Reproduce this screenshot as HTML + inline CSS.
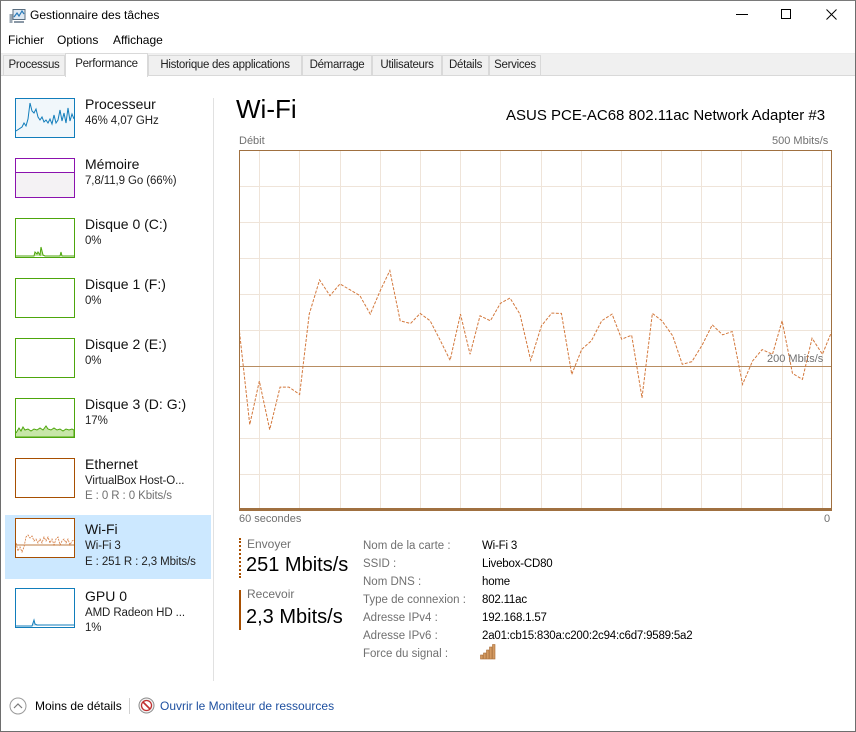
<!DOCTYPE html>
<html><head><meta charset="utf-8"><style>
*{margin:0;padding:0;box-sizing:border-box}
body{width:856px;height:732px;overflow:hidden;background:#fff;font-family:"Liberation Sans",sans-serif;font-size:12px;color:#000;position:relative}
.a{position:absolute;white-space:nowrap}
.win{position:absolute;left:0;top:0;width:856px;height:732px;border:1px solid #6e6e6e;border-top-color:#7a7a7a}
.tab{position:absolute;top:55px;height:20px;border:1px solid #d9d9d9;border-bottom:none;background:#f0f0f0;padding:3px 0 0;font-size:11.5px;letter-spacing:-0.3px;text-align:center;color:#222}
.th{position:absolute;left:15px;width:60px;height:40px;background:#fff}
.t1{font-size:14px;color:#111}
.t2{font-size:11.5px;color:#222;letter-spacing:-0.1px}
.g{color:#707070}
</style></head><body>
<div class="win"></div>
<svg class="a" style="left:9px;top:9px" width="17" height="15" viewBox="0 0 17 15"><rect x="4" y="0.5" width="12" height="10" fill="#dfe9f3" stroke="#5a6e80"/><polyline points="5,8 8,4 10,7 13,2 15,5" fill="none" stroke="#2a7ab8" stroke-width="1.2"/><rect x="0.5" y="5" width="3" height="9" fill="#9aa7b3"/><rect x="5" y="12" width="10" height="2" fill="#8a98a6"/></svg>
<div class="a" style="left:30px;top:8px;font-size:12px">Gestionnaire des tâches</div>
<div class="a" style="left:736px;top:14px;width:12px;height:1px;background:#000"></div>
<div class="a" style="left:781px;top:9px;width:10px;height:10px;border:1px solid #000"></div>
<svg class="a" style="left:826px;top:9px" width="11" height="11"><path d="M0.5 0.5L10.5 10.5M10.5 0.5L0.5 10.5" stroke="#000"/></svg>
<div class="a" style="left:8px;top:33px">Fichier</div>
<div class="a" style="left:57px;top:33px">Options</div>
<div class="a" style="left:113px;top:33px">Affichage</div>
<div class="a" style="left:1px;top:53px;width:854px;height:23px;background:#f0f0f0;border-top:1px solid #ececec;border-bottom:1px solid #d9d9d9"></div>
<div class="tab" style="left:3px;width:62px">Processus</div>
<div class="tab" style="left:65px;top:53px;height:24px;width:83px;background:#fff;padding-top:4px">Performance</div>
<div class="tab" style="left:148px;width:154px">Historique des applications</div>
<div class="tab" style="left:302px;width:70px">Démarrage</div>
<div class="tab" style="left:372px;width:70px">Utilisateurs</div>
<div class="tab" style="left:442px;width:47px">Détails</div>
<div class="tab" style="left:489px;width:52px">Services</div>
<div class="a" style="left:5px;top:515px;width:206px;height:64px;background:#cce8ff"></div>
<div class="a" style="left:213px;top:98px;width:1px;height:583px;background:#e1e1e1"></div>

<div class="th" style="top:98px;border:1px solid #117dbb;background:#f1f7fb"><svg width="58" height="38"><polyline points="0,32 3,30 6,28 8,24 10,27 12,20 14,4 16,12 18,14 20,10 22,18 24,21 26,18 28,23 30,21 32,24 34,20 36,25 38,16 40,24 42,21 44,11 46,22 48,14 50,24 52,9 54,22 56,15 58,20" fill="none" stroke="#117dbb" stroke-width="1"/></svg></div>
<div class="a t1" style="left:85px;top:96px">Processeur</div><div class="a t2" style="left:85px;top:115px">46% 4,07 GHz</div>

<div class="th" style="top:158px;border:1px solid #8b12ae"><div style="position:absolute;left:0;right:0;top:13px;bottom:0;background:#f4f2f4;border-top:1px solid #8b12ae"></div></div>
<div class="a t1" style="left:85px;top:156px">Mémoire</div><div class="a t2" style="left:85px;top:175px">7,8/11,9 Go (66%)</div>

<div class="th" style="top:218px;border:1px solid #4da60c"><svg width="58" height="38"><polyline points="0,37 18,37 19,33 21,35 22,33 24,36 25,28 27,36 29,37 44,37 45,33 46,37 58,37" fill="#c7e6a8" stroke="#4da60c"/></svg></div>
<div class="a t1" style="left:85px;top:216px">Disque 0 (C:)</div><div class="a t2" style="left:85px;top:235px">0%</div>
<div class="th" style="top:278px;border:1px solid #4da60c"></div>
<div class="a t1" style="left:85px;top:276px">Disque 1 (F:)</div><div class="a t2" style="left:85px;top:295px">0%</div>
<div class="th" style="top:338px;border:1px solid #4da60c"></div>
<div class="a t1" style="left:85px;top:336px">Disque 2 (E:)</div><div class="a t2" style="left:85px;top:355px">0%</div>
<div class="th" style="top:398px;border:1px solid #4da60c"><svg width="58" height="38"><polyline points="0,34 3,29 5,32 7,28 9,31 12,30 15,32 18,30 21,31 24,29 27,31 30,27 32,30 35,31 38,29 41,31 44,30 47,32 50,30 53,31 56,30 58,31 58,38 0,38" fill="#c7e6a8" stroke="#4da60c"/></svg></div>
<div class="a t1" style="left:85px;top:396px">Disque 3 (D: G:)</div><div class="a t2" style="left:85px;top:415px">17%</div>

<div class="th" style="top:458px;border:1px solid #a74f01"></div>
<div class="a t1" style="left:85px;top:456px">Ethernet</div><div class="a t2" style="left:85px;top:475px">VirtualBox Host-O...</div><div class="a t2 g" style="left:85px;top:490px">E : 0 R : 0 Kbits/s</div>

<div class="th" style="top:518px;border:1px solid #a74f01"><svg width="58" height="38"><line x1="0" y1="26" x2="58" y2="26" stroke="#a74f01" stroke-width="0.8"/><polyline points="0,24 2,32 4,28 6,33 8,28 10,18 12,16 14,19 16,17 18,22 20,20 22,24 24,20 26,24 28,18 30,22 32,18 34,24 36,20 38,26 40,20 42,18 44,26 46,22 48,20 50,24 52,20 54,26 56,22 58,21" fill="none" stroke="#d3783c" stroke-width="0.8" stroke-dasharray="2,1"/></svg></div>
<div class="a t1" style="left:85px;top:521px">Wi-Fi</div><div class="a t2" style="left:85px;top:540px">Wi-Fi 3</div><div class="a t2" style="left:85px;top:556px">E : 251 R : 2,3 Mbits/s</div>

<div class="th" style="top:588px;border:1px solid #117dbb"><svg width="58" height="38"><polyline points="0,37 16,37 17,34 18,31 19,35 21,36 58,36" fill="#bfdcee" stroke="#117dbb"/></svg></div>
<div class="a t1" style="left:85px;top:588px">GPU 0</div><div class="a t2" style="left:85px;top:607px">AMD Radeon HD ...</div><div class="a t2" style="left:85px;top:622px">1%</div>

<div class="a" style="left:236px;top:94px;font-size:26px;font-weight:300">Wi-Fi</div>
<div class="a" style="left:506px;top:107px;font-size:15px">ASUS PCE-AC68 802.11ac Network Adapter #3</div>
<div class="a g" style="left:239px;top:135px;font-size:11px">Débit</div>
<div class="a g" style="left:772px;top:135px;font-size:11px">500 Mbits/s</div>
<svg class="a" style="left:239px;top:150px" width="593" height="361">
<g stroke="#efe4d9" stroke-width="1">
<line x1="0" y1="36.5" x2="593" y2="36.5"/><line x1="0" y1="72.5" x2="593" y2="72.5"/><line x1="0" y1="108.5" x2="593" y2="108.5"/><line x1="0" y1="144.5" x2="593" y2="144.5"/><line x1="0" y1="180.5" x2="593" y2="180.5"/><line x1="0" y1="252.5" x2="593" y2="252.5"/><line x1="0" y1="288.5" x2="593" y2="288.5"/><line x1="0" y1="324.5" x2="593" y2="324.5"/>
<line x1="20.5" y1="0" x2="20.5" y2="361"/><line x1="60.5" y1="0" x2="60.5" y2="361"/><line x1="101.5" y1="0" x2="101.5" y2="361"/><line x1="141.5" y1="0" x2="141.5" y2="361"/><line x1="181.5" y1="0" x2="181.5" y2="361"/><line x1="221.5" y1="0" x2="221.5" y2="361"/><line x1="261.5" y1="0" x2="261.5" y2="361"/><line x1="302.5" y1="0" x2="302.5" y2="361"/><line x1="342.5" y1="0" x2="342.5" y2="361"/><line x1="382.5" y1="0" x2="382.5" y2="361"/><line x1="422.5" y1="0" x2="422.5" y2="361"/><line x1="462.5" y1="0" x2="462.5" y2="361"/><line x1="502.5" y1="0" x2="502.5" y2="361"/><line x1="543.5" y1="0" x2="543.5" y2="361"/><line x1="583.5" y1="0" x2="583.5" y2="361"/>
</g>
<line x1="0" y1="216.5" x2="593" y2="216.5" stroke="#b88d62" stroke-width="1"/>
<text x="528" y="212" font-size="11" fill="#707070" font-family="Liberation Sans, sans-serif">200 Mbits/s</text>
<svg x="0" y="0" width="593" height="361" viewBox="10 30 1545 1078" preserveAspectRatio="none">
<polyline vector-effect="non-scaling-stroke" fill="none" stroke="#d3783c" stroke-width="1" stroke-dasharray="3,1.5" points="10,560 38,850 63,720 90,865 117,738 140,738 168,760 193,520 220,418 247,465 273,430 300,448 325,465 352,520 378,450 403,390 430,540 457,548 482,518 508,540 535,600 560,658 587,520 612,640 638,525 665,540 691,488 716,472 742,520 770,658 798,555 825,517 850,518 877,700 903,625 928,600 955,540 982,520 1007,595 1033,583 1060,770 1087,518 1112,540 1140,585 1165,670 1190,662 1217,612 1243,552 1270,582 1295,572 1322,730 1348,660 1373,626 1400,640 1425,540 1452,697 1478,715 1503,592 1530,640 1555,570"/>
</svg>
<rect x="0.5" y="0.5" width="592" height="360" fill="none" stroke="#a07040" stroke-width="1"/>
<line x1="0" y1="359" x2="593" y2="359" stroke="#a07040" stroke-width="2"/>
</svg>
<div class="a g" style="left:239px;top:513px;font-size:11px">60 secondes</div>
<div class="a g" style="left:824px;top:513px;font-size:11px">0</div>

<div class="a" style="left:239px;top:538px;height:40px;border-left:2px dotted #a74f01"></div>
<div class="a g" style="left:247px;top:537px;font-size:12px">Envoyer</div>
<div class="a" style="left:246px;top:554px;font-size:20px">251 Mbits/s</div>
<div class="a" style="left:239px;top:590px;width:2px;height:40px;background:#a74f01"></div>
<div class="a g" style="left:247px;top:587px;font-size:12px">Recevoir</div>
<div class="a" style="left:246px;top:606px;font-size:20px">2,3 Mbits/s</div>

<div class="a g" style="left:363px;top:537px;line-height:18px;font-size:11.5px">Nom de la carte :<br>SSID :<br>Nom DNS :<br>Type de connexion :<br>Adresse IPv4 :<br>Adresse IPv6 :<br>Force du signal :</div>
<div class="a" style="left:482px;top:537px;line-height:18px;font-size:11.5px;letter-spacing:-0.2px">Wi-Fi 3<br>Livebox-CD80<br>home<br>802.11ac<br>192.168.1.57<br>2a01:cb15:830a:c200:2c94:c6d7:9589:5a2</div>
<svg class="a" style="left:480px;top:644px" width="17" height="16"><g fill="#d39a62" stroke="#a86b35" stroke-width="0.6"><rect x="0.5" y="11" width="2.5" height="4"/><rect x="3.5" y="9" width="2.5" height="6"/><rect x="6.5" y="6" width="2.5" height="9"/><rect x="9.5" y="3" width="2.5" height="12"/><rect x="12.5" y="0.5" width="2.5" height="14.5"/></g></svg>

<svg class="a" style="left:9px;top:697px" width="18" height="18"><circle cx="9" cy="9" r="8" fill="#fff" stroke="#9a9a9a"/><path d="M5 11L9 7L13 11" fill="none" stroke="#7a7a7a" stroke-width="1.2"/></svg>
<div class="a" style="left:35px;top:699px">Moins de détails</div>
<div class="a" style="left:129px;top:698px;width:1px;height:16px;background:#d0d0d0"></div>
<svg class="a" style="left:138px;top:697px" width="17" height="17"><circle cx="8.5" cy="8.5" r="7.5" fill="#f2f2f2" stroke="#8a8a8a"/><circle cx="8.5" cy="8.5" r="5" fill="#fff" stroke="#c03030" stroke-width="1.3"/><path d="M5 5L12 12" stroke="#c03030" stroke-width="1.6"/></svg>
<div class="a" style="left:160px;top:699px;color:#1e50a0">Ouvrir le Moniteur de ressources</div>
</body></html>
